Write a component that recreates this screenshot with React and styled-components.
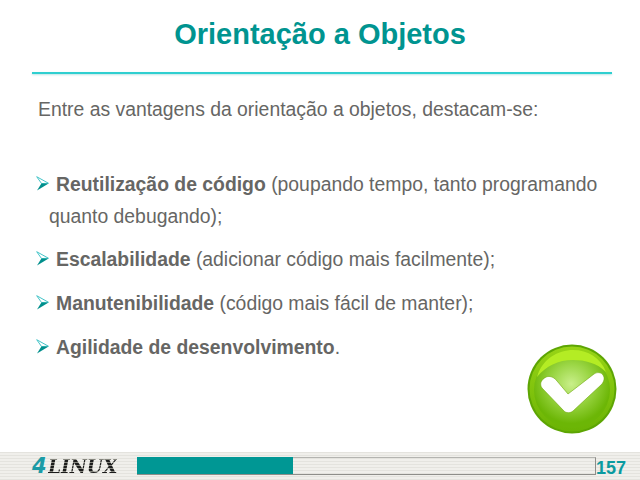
import React from "react";
import styled, { createGlobalStyle } from "styled-components";

const items = [
  { id: "reuso", bold: "Reutilização de código", rest: " (poupando tempo, tanto programando", more: "quanto debugando);" },
  { id: "escala", bold: "Escalabilidade", rest: " (adicionar código mais facilmente);" },
  { id: "manut", bold: "Manutenibilidade", rest: " (código mais fácil de manter);" },
  { id: "agil", bold: "Agilidade de desenvolvimento", rest: "." },
];

const Arrow = () => (
  <ArrowSvg viewBox="0 0 13 15">
    <path d="M0.7 0.7 L12.4 7.2 L5.6 7.6 Z" fill="#fff" stroke="#45c4c8" strokeWidth="1" strokeLinejoin="round" />
    <path d="M12.6 7.4 L1 14.6 L5.4 7.6 Z" fill="#008f8c" />
  </ArrowSvg>
);

const CheckBadge = () => (
  <BadgeSvg viewBox="0 0 90 90">
    <defs>
      <radialGradient id="inner" cx="49%" cy="42%" r="52%">
        <stop offset="0%" stopColor="#c9ef8a" />
        <stop offset="50%" stopColor="#9bd645" />
        <stop offset="100%" stopColor="#6cb606" />
      </radialGradient>
      <linearGradient id="rim" x1="0" y1="0" x2="0" y2="1">
        <stop offset="0%" stopColor="#98d416" />
        <stop offset="100%" stopColor="#6ab304" />
      </linearGradient>
    </defs>
    <circle cx="45" cy="45" r="44.5" fill="#5da503" />
    <circle cx="45" cy="45" r="42.5" fill="url(#rim)" />
    <circle cx="45" cy="46" r="38" fill="url(#inner)" />
    <path d="M10 33 C15 15 31 6 46 6 C61 6 74 14 79 28 C70 19 58 16 46 16 C31 16 19 22 10 33 Z" fill="#b4ec24" />
    <path
      d="M14 38 C16 34 20 32 23 32.5 C26 33 28 34.5 30 37 L41 50 L67 30 C70 28 74 28 76 31 C78 34 77 37 75 40 L46 67 C43 69.5 39 69 37 67 L15 44 C13.5 42 13.5 40 14 38 Z"
      fill="#fff"
      stroke="#6da80a"
      strokeWidth="0.6"
    />
  </BadgeSvg>
);

const App = () => {
  return (
    <Slide>
      <GlobalStyle />
      <Title>Orientação a Objetos</Title>
      <Rule />
      <Intro>Entre as vantagens da orientação a objetos, destacam-se:</Intro>
      <List>
        {items.map((item) => (
          <Item key={item.id}>
            <Line>
              <Arrow />
              <span>
                <b>{item.bold}</b>
                {item.rest}
              </span>
            </Line>
            {item.more && <MoreLine>{item.more}</MoreLine>}
          </Item>
        ))}
      </List>
      <CheckBadge />
      <Footer>
        <Logo>
          <Four>4</Four>
          <Linux>LINUX</Linux>
        </Logo>
        <Progress>
          <ProgressFill $percent={34} />
        </Progress>
        <PageNumber>157</PageNumber>
      </Footer>
    </Slide>
  );
};

const GlobalStyle = createGlobalStyle`
  html, body {
    margin: 0;
    padding: 0;
    background: #fff;
  }
`;

const Slide = styled.div`
  position: relative;
  display: flex;
  flex-direction: column;
  width: 640px;
  height: 480px;
  overflow: hidden;
  background: #fff;
  font-family: "Liberation Sans", Arial, sans-serif;
  color: #666664;
`;

const Title = styled.h1`
  margin: 15px 0 0;
  height: 38px;
  line-height: 38px;
  font-size: 29px;
  font-weight: bold;
  text-align: center;
  color: #009490;
`;

const Rule = styled.div`
  height: 2px;
  margin: 19px 28px 0 32px;
  background: #2fcfd0;
  box-shadow: 0 1px 2px rgba(90, 190, 190, 0.4);
`;

const Intro = styled.p`
  margin: 23px 0 0 38px;
  height: 24px;
  line-height: 24px;
  font-size: 19.36px;
`;

const List = styled.ul`
  list-style: none;
  margin: 47px 0 0;
  padding: 0 0 0 36px;
  display: flex;
  flex-direction: column;
  gap: 11.8px;
  font-size: 19.36px;
`;

const Item = styled.li`
  display: flex;
  flex-direction: column;
`;

const Line = styled.div`
  display: flex;
  align-items: center;
  gap: 7px;
  height: 32px;
  white-space: nowrap;
`;

const MoreLine = styled.div`
  height: 32px;
  line-height: 32px;
  margin-left: 13px;
`;

const ArrowSvg = styled.svg`
  flex: none;
  width: 13px;
  height: 15px;
  margin-bottom: 2px;
`;

const BadgeSvg = styled.svg`
  position: absolute;
  left: 527px;
  top: 344px;
  width: 90px;
  height: 90px;
`;

const Footer = styled.footer`
  margin-top: auto;
  display: flex;
  align-items: center;
  height: 28px;
  background: repeating-linear-gradient(to bottom, #e4e3de 0, #e4e3de 1px, #f0efeb 1px, #f0efeb 3px);
`;

const Logo = styled.div`
  display: flex;
  align-items: baseline;
  width: 105px;
  margin-left: 32px;
  font-weight: bold;
  font-style: italic;
  line-height: 20px;
`;

const Four = styled.span`
  width: 16px;
  font-family: "DejaVu Sans", sans-serif;
  font-size: 21px;
  color: #1b9ba6;
`;

const Linux = styled.span`
  font-family: "DejaVu Serif", serif;
  font-size: 18.6px;
  background: repeating-linear-gradient(to bottom, #1c1c1c 0, #1c1c1c 2px, #85857d 2px, #85857d 3px);
  -webkit-background-clip: text;
  background-clip: text;
  color: transparent;
`;

const Progress = styled.div`
  width: 459px;
  height: 18px;
  box-sizing: border-box;
  border: 1px solid #8e8e8a;
  border-left: none;
  border-top-color: #b4b4b0;
`;

const ProgressFill = styled.div`
  width: ${(p) => p.$percent}%;
  height: calc(100% + 1px);
  margin-top: -1px;
  background: #009794;
`;

const PageNumber = styled.div`
  margin: 4px 0 0;
  font-size: 18px;
  font-weight: bold;
  color: #0a9aa0;
`;

export default App;
